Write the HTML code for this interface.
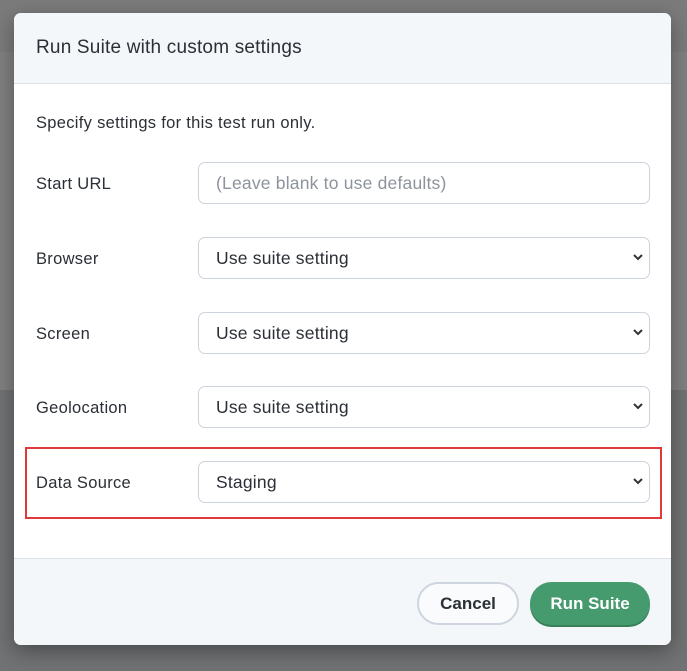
<!DOCTYPE html>
<html><head><style>
body{margin:0;width:687px;height:671px;background:#707273;position:relative;overflow:hidden;font-family:"Liberation Sans",sans-serif;}
.bgtop{position:absolute;left:0;top:0;width:687px;height:52px;background:#7b7b7b;}
.bgmid{position:absolute;left:0;top:52px;width:687px;height:338px;background:#808080;}
.modal{position:absolute;left:14px;top:13px;width:657px;height:632px;background:#fff;border-radius:7px;overflow:hidden;box-shadow:0 6px 20px rgba(0,0,0,.35);}
.hdr{height:70px;background:#f4f7fa;border-bottom:1px solid #dde1e6;}
.hdr span{position:absolute;left:22px;top:24px;font-size:19px;letter-spacing:0.2px;color:#2b2f36;}
.txt{position:absolute;font-size:16.5px;letter-spacing:0.3px;color:#2b2f36;}
.inp{position:absolute;left:184px;width:452px;height:42px;border:1px solid #cdd3dd;border-radius:7px;font-size:17.5px;letter-spacing:0.2px;color:#2b2f36;box-sizing:border-box;padding:10px 17px;}
.inp svg{position:absolute;right:6px;top:16px;}
.ftr{position:absolute;left:0;top:545px;width:657px;height:87px;background:#f4f7fa;border-top:1px solid #dde1e6;}
.btn{position:absolute;top:23px;height:43px;border-radius:22px;font-size:17px;font-weight:bold;text-align:center;line-height:43px;box-sizing:border-box;}
</style></head><body>
<div class="bgtop"></div><div class="bgmid"></div>
<div class="modal">
<div class="hdr"><span>Run Suite with custom settings</span></div>
<div class="txt" style="left:22px;top:101px">Specify settings for this test run only.</div>
<div class="txt" style="left:22px;top:162px">Start URL</div>
<div class="inp" style="top:149px;color:#8d939c">(Leave blank to use defaults)</div>
<div class="txt" style="left:22px;top:237px">Browser</div>
<div class="inp" style="top:224px">Use suite setting<svg width="10" height="7"><path d="M1 1l4 4 4-4" stroke="#333" stroke-width="2" fill="none"/></svg></div>
<div class="txt" style="left:22px;top:312px">Screen</div>
<div class="inp" style="top:299px">Use suite setting<svg width="10" height="7"><path d="M1 1l4 4 4-4" stroke="#333" stroke-width="2" fill="none"/></svg></div>
<div class="txt" style="left:22px;top:386px">Geolocation</div>
<div class="inp" style="top:373px">Use suite setting<svg width="10" height="7"><path d="M1 1l4 4 4-4" stroke="#333" stroke-width="2" fill="none"/></svg></div>
<div style="position:absolute;left:11px;top:434px;width:637px;height:72px;border:2px solid #e0393a;box-sizing:border-box;"></div>
<div class="txt" style="left:22px;top:461px">Data Source</div>
<div class="inp" style="top:448px">Staging<svg width="10" height="7"><path d="M1 1l4 4 4-4" stroke="#333" stroke-width="2" fill="none"/></svg></div>
<div class="ftr">
<div class="btn" style="left:403px;width:102px;border:2px solid #cfd5df;color:#2b2f36;line-height:39px;background:#fafbfc">Cancel</div>
<div class="btn" style="left:516px;width:120px;background:#459a6e;color:#fff;box-shadow:0 2px 0 #37805a">Run Suite</div>
</div>
</div>
</body></html>
